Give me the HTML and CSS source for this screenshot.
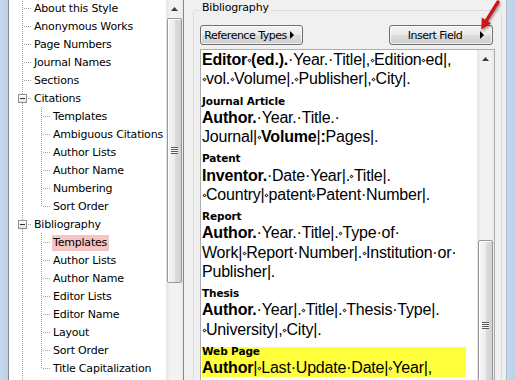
FILE: index.html
```html
<!DOCTYPE html>
<html lang="en">
<head>
  <meta charset="UTF-8">
  <title>Output Style - Bibliography Templates</title>
  <link rel="stylesheet" href="styles.css">
</head>
<body>
  <div class="window">
    <div class="frame frame-left"></div>

    <div class="tree-pane">
      <ul class="tree">
        <li class="node"><span class="guide tee"></span><span class="label">About this Style</span></li>
        <li class="node"><span class="guide tee"></span><span class="label">Anonymous Works</span></li>
        <li class="node"><span class="guide tee"></span><span class="label">Page Numbers</span></li>
        <li class="node"><span class="guide tee"></span><span class="label">Journal Names</span></li>
        <li class="node"><span class="guide tee"></span><span class="label">Sections</span></li>
        <li class="node"><span class="guide exp"><span class="toggle"></span></span><span class="label">Citations</span></li>
        <li class="node"><span class="guide pipe"></span><span class="guide tee"></span><span class="label">Templates</span></li>
        <li class="node"><span class="guide pipe"></span><span class="guide tee"></span><span class="label">Ambiguous Citations</span></li>
        <li class="node"><span class="guide pipe"></span><span class="guide tee"></span><span class="label">Author Lists</span></li>
        <li class="node"><span class="guide pipe"></span><span class="guide tee"></span><span class="label">Author Name</span></li>
        <li class="node"><span class="guide pipe"></span><span class="guide tee"></span><span class="label">Numbering</span></li>
        <li class="node"><span class="guide pipe"></span><span class="guide ell"></span><span class="label">Sort Order</span></li>
        <li class="node"><span class="guide exp"><span class="toggle"></span></span><span class="label">Bibliography</span></li>
        <li class="node"><span class="guide pipe"></span><span class="guide tee"></span><span class="label selected">Templates</span></li>
        <li class="node"><span class="guide pipe"></span><span class="guide tee"></span><span class="label">Author Lists</span></li>
        <li class="node"><span class="guide pipe"></span><span class="guide tee"></span><span class="label">Author Name</span></li>
        <li class="node"><span class="guide pipe"></span><span class="guide tee"></span><span class="label">Editor Lists</span></li>
        <li class="node"><span class="guide pipe"></span><span class="guide tee"></span><span class="label">Editor Name</span></li>
        <li class="node"><span class="guide pipe"></span><span class="guide tee"></span><span class="label">Layout</span></li>
        <li class="node"><span class="guide pipe"></span><span class="guide tee"></span><span class="label">Sort Order</span></li>
        <li class="node"><span class="guide pipe"></span><span class="guide ell"></span><span class="label">Title Capitalization</span></li>
        <li class="node"><span class="guide pipe"></span></li>
      </ul>
      <div class="scrollbar">
        <div class="sb-up"><svg width="7" height="4" viewBox="0 0 7 4"><path d="M0 4L3.5 0L7 4Z" fill="#3c3c3c"/></svg></div>
        <div class="sb-thumb tree-thumb"><span class="grip"></span></div>
      </div>
    </div>

    <div class="dialog">
      <fieldset class="group">
        <legend>Bibliography</legend>
        <div class="toolbar">
          <button class="btn ref-btn"><span class="btn-text">Reference Types</span><span class="tri"></span></button>
          <button class="btn insert-btn"><span class="btn-text">Insert Field</span><span class="tri"></span></button>
        </div>
        <div class="editor">
          <div class="doc">
            <div class="ln"><b>Editor</b><span class="lk"></span><b>(ed.).</b>·Year.·Title|,<span class="lk"></span>Edition<span class="lk"></span>ed|,</div>
            <div class="ln"><span class="lk"></span>vol.<span class="lk"></span>Volume|.<span class="lk"></span>Publisher|,<span class="lk"></span>City|.</div>
            <div class="ln"><span class="hd">Journal Article</span></div>
            <div class="ln"><b>Author.</b>·Year.·Title.·</div>
            <div class="ln">Journal|<span class="lk"></span><b>Volume</b>|<b>:</b>Pages|.</div>
            <div class="ln"><span class="hd">Patent</span></div>
            <div class="ln"><b>Inventor.</b>·Date·Year|.<span class="lk"></span>Title|.</div>
            <div class="ln"><span class="lk"></span>Country|<span class="lk"></span>patent<span class="lk"></span>Patent·Number|.</div>
            <div class="ln"><span class="hd">Report</span></div>
            <div class="ln"><b>Author.</b>·Year.·Title|.<span class="lk"></span>Type·of·</div>
            <div class="ln">Work|<span class="lk"></span>Report·Number|.<span class="lk"></span>Institution·or·</div>
            <div class="ln">Publisher|.</div>
            <div class="ln"><span class="hd">Thesis</span></div>
            <div class="ln"><b>Author.</b>·Year|.<span class="lk"></span>Title|.<span class="lk"></span>Thesis·Type|.</div>
            <div class="ln"><span class="lk"></span>University|,<span class="lk"></span>City|.</div>
            <div class="web">
              <div class="ln"><span class="hd">Web Page</span></div>
              <div class="ln"><b>Author</b>|<span class="lk"></span>Last·Update·Date|<span class="lk"></span>Year|,</div>
            </div>
          </div>
          <div class="scrollbar">
            <div class="sb-up"><svg width="7" height="4" viewBox="0 0 7 4"><path d="M0 4L3.5 0L7 4Z" fill="#3c3c3c"/></svg></div>
            <div class="sb-thumb doc-thumb"><span class="grip"></span></div>
          </div>
        </div>
      </fieldset>
    </div>

    <div class="frame frame-right"></div>

    <!-- red callout arrow pointing at the Insert Field menu -->
    <svg class="pointer" width="40" height="40" viewBox="0 0 40 40">
      <line x1="28" y1="2" x2="16.5" y2="20.3" stroke="#cf1616" stroke-width="3.4" stroke-linecap="round"/>
      <path d="M11.3 29.5L11.8 17.4L21 23.2Z" fill="#cf1616"/>
    </svg>
  </div>
</body>
</html>
```

FILE: styles.css
```css
:root {
  --dialog-bg: #f0f0f0;
  --frame: #bcd0e8;
  --border: #828790;
  --tree-line: #a0a0a0;
  --selected: #f5c5c1;
  --highlight: #ffff3c;
}

* {
  box-sizing: border-box;
  margin: 0;
  padding: 0;
}

body {
  width: 515px;
  height: 380px;
  overflow: hidden;
  font-family: 'DejaVu Sans', Tahoma, sans-serif;
  font-size: 11px;
  letter-spacing: -0.2px;
  color: #000;
  background: var(--dialog-bg);
}

.window {
  position: relative;
  display: flex;
  height: 380px;
  overflow: hidden;
}

.frame {
  flex: none;
  background: linear-gradient(to right, #c8d8eb, var(--frame));
}

.frame-left {
  width: 8px;
}

.frame-right {
  width: 9px;
  border-left: 1px solid #a7bad1;
}

/* tree */
.tree-pane {
  flex: none;
  display: flex;
  width: 176px;
  background: #fff;
  border-left: 1px solid var(--border);
  border-right: 1px solid var(--border);
}

.tree {
  flex: 1;
  list-style: none;
  margin-top: -1px;
  padding-left: 4px;
  overflow: hidden;
}

.node {
  display: flex;
  height: 18px;
}

.guide {
  flex: none;
  width: 19px;
  height: 18px;
}

.pipe {
  background: repeating-linear-gradient(to bottom, var(--tree-line) 0 1px, transparent 1px 2px) 9px 0 / 1px 18px no-repeat;
}

.tee {
  background:
    repeating-linear-gradient(to bottom, var(--tree-line) 0 1px, transparent 1px 2px) 9px 0 / 1px 18px no-repeat,
    repeating-linear-gradient(to right, var(--tree-line) 0 1px, transparent 1px 2px) 11px 9px / 8px 1px no-repeat;
}

.ell {
  background:
    repeating-linear-gradient(to bottom, var(--tree-line) 0 1px, transparent 1px 2px) 9px 0 / 1px 10px no-repeat,
    repeating-linear-gradient(to right, var(--tree-line) 0 1px, transparent 1px 2px) 11px 9px / 8px 1px no-repeat;
}

.exp {
  display: flex;
  background:
    repeating-linear-gradient(to bottom, var(--tree-line) 0 1px, transparent 1px 2px) 9px 0 / 1px 18px no-repeat,
    repeating-linear-gradient(to right, var(--tree-line) 0 1px, transparent 1px 2px) 15px 9px / 4px 1px no-repeat;
}

.toggle {
  width: 9px;
  height: 9px;
  margin: 5px 0 0 5px;
  border: 1px solid #919191;
  background:
    linear-gradient(#25324a, #25324a) center / 5px 1px no-repeat,
    linear-gradient(#ffffff, #e3e3e3);
}

.label {
  height: 16px;
  margin: 2px 0 0 1px;
  padding: 0 2px 0 1px;
  line-height: 16px;
  white-space: nowrap;
}

.label.selected {
  background: var(--selected);
}

/* scrollbars */
.scrollbar {
  flex: none;
  display: flex;
  flex-direction: column;
  align-items: center;
  width: 17px;
  background: linear-gradient(to right, #e4e4e4, #f2f2f2 25%, #f2f2f2 80%, #eaeaea);
}

.sb-up {
  display: flex;
  align-items: center;
  justify-content: center;
  flex: none;
  width: 17px;
  height: 17px;
}

.sb-thumb {
  flex: none;
  display: flex;
  align-items: center;
  justify-content: center;
  width: 15px;
  border: 1px solid #979797;
  border-radius: 2px;
  background: linear-gradient(to right, #f6f6f6, #ececec 50%, #dcdcdc 50%, #d2d2d2);
  box-shadow: inset 1px 1px #fff;
}

.tree-thumb {
  height: 265px;
  margin-top: 1px;
}

.doc-thumb {
  height: 170px;
  margin-top: 173px;
}

.grip {
  width: 7px;
  height: 7px;
  background: repeating-linear-gradient(to bottom, #595959 0 1px, #f7f7f7 1px 2px);
}

/* right side */
.dialog {
  flex: 1;
  padding: 1px 4px 0 9px;
}

.group {
  height: 420px;
  padding: 0 6px;
  border: 1px solid #d5dfe5;
  border-radius: 3px;
}

.group legend {
  padding: 0 2px 6px;
  line-height: 13px;
}

.toolbar {
  display: flex;
  justify-content: space-between;
  padding: 5px 2px 0 0;
}

.btn {
  display: flex;
  align-items: center;
  height: 20px;
  padding: 0 8px 0 0;
  border: 1px solid #707070;
  border-radius: 3px;
  background: linear-gradient(#f2f2f2, #ebebeb 50%, #dddddd 50%, #cfcfcf);
  box-shadow: inset 0 0 0 1px rgba(255, 255, 255, 0.7);
  font: inherit;
  letter-spacing: -0.5px;
  line-height: 13px;
  color: #000;
}

.ref-btn {
  width: 103px;
}

.insert-btn {
  width: 104px;
}

.btn-text {
  flex: 1;
  text-align: center;
  white-space: nowrap;
}

.tri {
  flex: none;
  width: 0;
  height: 0;
  border-style: solid;
  border-width: 4px 0 4px 4px;
  border-color: transparent transparent transparent #000;
}

.editor {
  display: flex;
  height: 360px;
  margin-top: 4px;
  background: #fff;
  border: 1px solid #abadb3;
}

.doc {
  flex: 1;
  padding-left: 1px;
  overflow: hidden;
  font-family: 'Liberation Sans', Arial, sans-serif;
  font-size: 16px;
  line-height: 19.25px;
  letter-spacing: -0.2px;
}

.ln {
  white-space: pre;
}

.hd {
  font-family: 'DejaVu Sans', Tahoma, sans-serif;
  font-size: 10.5px;
  font-weight: bold;
  line-height: 1;
  letter-spacing: -0.1px;
  vertical-align: -1px;
}

/* link marker between fields */
.lk {
  display: inline-block;
  width: 3px;
  height: 3px;
  margin: 0 0.5px;
  border: 1px solid #3a3a3a;
  background: #fff;
  transform: rotate(45deg);
  vertical-align: 3px;
}

.web {
  width: 264px;
  background: linear-gradient(to bottom, transparent 8px, var(--highlight) 8px);
}

.pointer {
  position: absolute;
  top: 0;
  left: 470px;
  overflow: visible;
  filter: drop-shadow(1px 2px 1px rgba(0, 0, 0, 0.35));
}
```
